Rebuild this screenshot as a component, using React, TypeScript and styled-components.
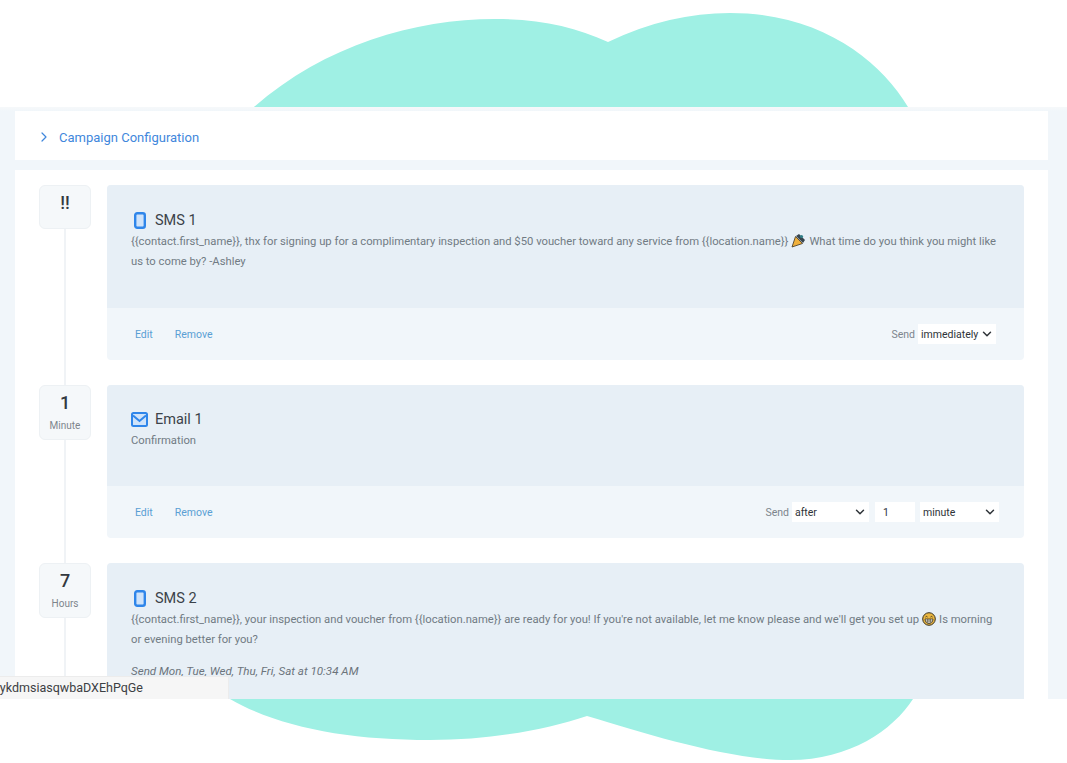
import React from "react";
import styled, { createGlobalStyle } from "styled-components";
import { ChevronDown, ChevronRight } from "lucide-react";

const GlobalStyle = createGlobalStyle`
  html, body {
    margin: 0;
    padding: 0;
    background: #fff;
    font-family: Roboto, "Liberation Sans", sans-serif;
  }
`;

const Page = styled.div`
  position: relative;
  width: 1067px;
  height: 763px;
  padding-top: 107px;
  box-sizing: border-box;
  overflow: hidden;
`;

const Blob = styled.svg`
  position: absolute;
  top: 0;
  left: 0;
`;

const Window = styled.div`
  position: relative;
  height: 592px;
  box-sizing: border-box;
  padding: 4px 19px 0 15px;
  background: linear-gradient(#f6f8fa 0, #f1f6fa 4px);
  overflow: hidden;
`;

const ConfigBar = styled.div`
  height: 49px;
  box-sizing: border-box;
  padding: 3px 0 0 21px;
  display: flex;
  align-items: center;
  gap: 7px;
  background: #fff;
  color: #3f87dc;
  font-size: 13px;
`;

const Panel = styled.div`
  margin-top: 10px;
  height: 600px;
  padding: 15px 24px 0;
  background: #fff;
`;

const Step = styled.div`
  display: grid;
  grid-template-columns: 52px 917px;
  column-gap: 16px;
  margin-bottom: 25px;
`;

const Rail = styled.div`
  position: relative;
  display: flex;
  justify-content: center;

  &::after {
    content: "";
    position: absolute;
    top: 20px;
    bottom: -25px;
    left: 25px;
    width: 2px;
    background: #f0f3f6;
  }
`;

const Badge = styled.div<{ $tall?: boolean }>`
  position: relative;
  z-index: 1;
  width: 52px;
  height: ${(p) => (p.$tall ? "55px" : "44px")};
  box-sizing: border-box;
  padding-top: 7px;
  text-align: center;
  background: #f5f8fa;
  border: 1px solid #edf1f4;
  border-radius: 6px;
`;

const BadgeValue = styled.div`
  font-size: 18px;
  line-height: 20px;
  font-weight: 500;
  color: #33393f;
`;

const BadgeUnit = styled.div`
  margin-top: 6px;
  font-size: 10px;
  line-height: 14px;
  color: #7d858c;
`;

const Card = styled.div`
  border-radius: 4px;
  overflow: hidden;
  background: #f1f6fa;
`;

const CardBody = styled.div<{ $height: number; $top: number }>`
  height: ${(p) => p.$height}px;
  box-sizing: border-box;
  padding: ${(p) => p.$top}px 24px 0;
  background: #e7eff6;
`;

const CardTitle = styled.div`
  display: flex;
  align-items: center;
  gap: 7px;
  height: 22px;
  font-size: 14.5px;
  color: #3b4249;
`;

const CardIcon = styled.span`
  display: flex;
  justify-content: center;
  width: 17px;
`;

const Message = styled.p`
  margin: 1px 0 0;
  font-size: 11.25px;
  line-height: 20px;
  color: #717b84;
`;

const Emoji = styled.svg`
  display: inline-block;
  margin: 0 3px;
  vertical-align: -3px;
`;

const Schedule = styled.p`
  margin: 11px 0 0;
  font-size: 11.6px;
  line-height: 20px;
  font-style: italic;
  color: #6c747c;
`;

const CardFooter = styled.div<{ $right: number }>`
  height: 52px;
  box-sizing: border-box;
  padding: 0 ${(p) => p.$right}px 0 28px;
  display: flex;
  align-items: center;
  justify-content: space-between;
`;

const Actions = styled.div`
  display: flex;
  gap: 22px;
`;

const ActionLink = styled.a`
  color: #5a9fd4;
  font-size: 10.5px;
`;

const SendControls = styled.div`
  display: flex;
  align-items: center;
`;

const SendLabel = styled.span`
  margin-right: 3px;
  font-size: 10.5px;
  color: #7d858c;
`;

const Select = styled.div<{ $width: number; $gap?: number }>`
  width: ${(p) => p.$width}px;
  height: 20px;
  box-sizing: border-box;
  margin-left: ${(p) => p.$gap ?? 0}px;
  padding: 0 2px 0 3px;
  display: flex;
  align-items: center;
  justify-content: space-between;
  background: #fff;
  font-size: 10.5px;
  color: #2e3338;
`;

const NumberField = styled.input`
  width: 40px;
  height: 20px;
  box-sizing: border-box;
  margin-left: 6px;
  padding: 0 0 0 8px;
  border: 0;
  background: #fff;
  font-family: inherit;
  font-size: 10.5px;
  color: #2e3338;
`;

const StatusBar = styled.div`
  position: absolute;
  left: 0;
  bottom: 0;
  width: 229px;
  height: 23px;
  box-sizing: border-box;
  padding: 0 85px 2px 0;
  display: flex;
  align-items: center;
  justify-content: flex-end;
  white-space: nowrap;
  background: #f6f6f6;
  border-top: 1px solid #ececec;
  border-right: 1px solid #ececec;
  font-size: 12.5px;
  color: #3c4043;
`;

const PhoneIcon = () => (
  <svg width="12" height="17" viewBox="0 0 12 17">
    <rect x="1.2" y="1.2" width="9.6" height="14.6" rx="2" fill="#cfe3fa" stroke="#2f86ea" strokeWidth="2.4" />
  </svg>
);

const MailIcon = () => (
  <svg width="17" height="15" viewBox="0 0 17 15">
    <rect x="1" y="1" width="15" height="13" rx="1.5" fill="#cfe3fa" stroke="#2f86ea" strokeWidth="2" />
    <path d="M2 3.5 L8.5 9 L15 3.5" fill="none" stroke="#2f86ea" strokeWidth="2" />
  </svg>
);

const PartyEmoji = () => (
  <Emoji width="15" height="15" viewBox="0 0 15 15">
    <path d="M1 14 L4.5 3.5 L11.5 10.5 Z" fill="#efb03c" stroke="#3d3423" strokeWidth="0.8" />
    <path d="M5 3 L8 1 L14 7 L12 10 Z" fill="#37454e" />
    <circle cx="10.5" cy="3.5" r="1.6" fill="#2f7f88" />
  </Emoji>
);

const GrinEmoji = () => (
  <Emoji width="14" height="14" viewBox="0 0 14 14">
    <circle cx="7" cy="7" r="6.3" fill="#e9b640" stroke="#3a3222" strokeWidth="1" />
    <path d="M3.5 5 Q4.5 3.8 5.5 5 M8.5 5 Q9.5 3.8 10.5 5" fill="none" stroke="#3a3222" strokeWidth="0.9" />
    <path d="M3 7 H11 Q10.5 11.5 7 11.5 Q3.5 11.5 3 7 Z" fill="#f8f3e4" stroke="#3a3222" strokeWidth="0.8" />
    <path d="M3.5 9 H10.5 M5.5 7 V11 M7 7 V11.5 M8.5 7 V11" stroke="#3a3222" strokeWidth="0.5" />
  </Emoji>
);

const Dropdown = ({ label, width, gap }: { label: string; width: number; gap?: number }) => (
  <Select $width={width} $gap={gap}>
    {label}
    <ChevronDown size={14} strokeWidth={2.5} color="#2e3338" />
  </Select>
);

export default function App() {
  return (
    <Page>
      <GlobalStyle />
      <Blob width="1067" height="763" viewBox="0 0 1067 763">
        <path
          d="M254 107 C325 45 415 19 495 19 C540 19 575 27 608 42 C650 22 690 13 730 13 C820 13 880 60 908 107 Z"
          fill="#9ff0e4"
        />
        <path
          d="M230 699 C280 728 350 740 430 740 C490 740 545 730 587 716 C650 735 730 760 790 760 C850 760 893 730 913 699 Z"
          fill="#9ff0e4"
        />
      </Blob>
      <Window>
        <ConfigBar>
          <ChevronRight size={16} strokeWidth={1.8} />
          Campaign Configuration
        </ConfigBar>
        <Panel>
          <Step>
            <Rail>
              <Badge>
                <BadgeValue>!!</BadgeValue>
              </Badge>
            </Rail>
            <Card>
              <CardBody $height={123} $top={24}>
                <CardTitle>
                  <CardIcon>
                    <PhoneIcon />
                  </CardIcon>
                  SMS 1
                </CardTitle>
                <Message>
                  {"{{contact.first_name}}, thx for signing up for a complimentary inspection and $50 voucher toward any service from {{location.name}}"}
                  <PartyEmoji />
                  What time do you think you might like us to come by? -Ashley
                </Message>
              </CardBody>
              <CardFooter $right={28}>
                <Actions>
                  <ActionLink>Edit</ActionLink>
                  <ActionLink>Remove</ActionLink>
                </Actions>
                <SendControls>
                  <SendLabel>Send</SendLabel>
                  <Dropdown label="immediately" width={78} />
                </SendControls>
              </CardFooter>
            </Card>
          </Step>
          <Step>
            <Rail>
              <Badge $tall>
                <BadgeValue>1</BadgeValue>
                <BadgeUnit>Minute</BadgeUnit>
              </Badge>
            </Rail>
            <Card>
              <CardBody $height={101} $top={23}>
                <CardTitle>
                  <CardIcon>
                    <MailIcon />
                  </CardIcon>
                  Email 1
                </CardTitle>
                <Message>Confirmation</Message>
              </CardBody>
              <CardFooter $right={25}>
                <Actions>
                  <ActionLink>Edit</ActionLink>
                  <ActionLink>Remove</ActionLink>
                </Actions>
                <SendControls>
                  <SendLabel>Send</SendLabel>
                  <Dropdown label="after" width={77} />
                  <NumberField defaultValue="1" readOnly />
                  <Dropdown label="minute" width={79} gap={5} />
                </SendControls>
              </CardFooter>
            </Card>
          </Step>
          <Step>
            <Rail>
              <Badge $tall>
                <BadgeValue>7</BadgeValue>
                <BadgeUnit>Hours</BadgeUnit>
              </Badge>
            </Rail>
            <Card>
              <CardBody $height={160} $top={24}>
                <CardTitle>
                  <CardIcon>
                    <PhoneIcon />
                  </CardIcon>
                  SMS 2
                </CardTitle>
                <Message>
                  {"{{contact.first_name}}, your inspection and voucher from {{location.name}} are ready for you! If you're not available, let me know please and we'll get you set up"}
                  <GrinEmoji />
                  Is morning or evening better for you?
                </Message>
                <Schedule>Send Mon, Tue, Wed, Thu, Fri, Sat at 10:34 AM</Schedule>
              </CardBody>
            </Card>
          </Step>
        </Panel>
        <StatusBar>ykdmsiasqwbaDXEhPqGe</StatusBar>
      </Window>
    </Page>
  );
}
